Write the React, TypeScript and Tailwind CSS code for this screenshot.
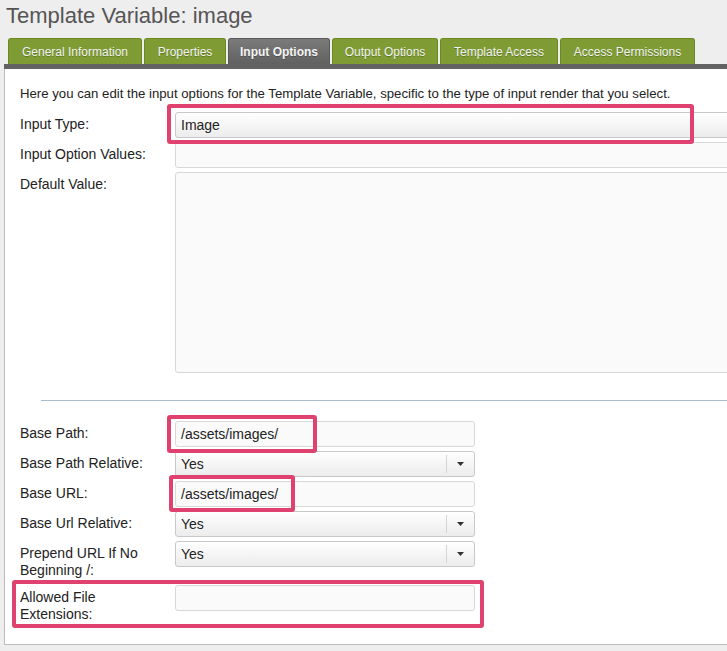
import React from "react";

const tabs = [
  { label: "General Information", w: "w-[134px]" },
  { label: "Properties", w: "w-[82px]" },
  { label: "Input Options", w: "w-[102px]", active: true },
  { label: "Output Options", w: "w-[106px]" },
  { label: "Template Access", w: "w-[118px]" },
  { label: "Access Permissions", w: "w-[135px]" },
];

function Select({ value, wide }: { value: string; wide?: boolean }) {
  return (
    <div
      className={`flex h-[26px] shrink-0 items-center rounded-[3px] border border-[#c8c8c8] bg-gradient-to-b from-white to-[#ececec] ${
        wide ? "w-[560px]" : "w-[300px]"
      }`}
    >
      <span className="flex-1 pl-[5px] text-[14px] text-[#222]">{value}</span>
      {!wide && (
        <span className="flex h-[18px] w-[28px] items-center justify-center border-l border-[#d4d4d4]">
          <svg width="7" height="4" viewBox="0 0 7 4">
            <path d="M0 0h7L3.5 4z" fill="#333" />
          </svg>
        </span>
      )}
    </div>
  );
}

function TextBox({ value, wide }: { value?: string; wide?: boolean }) {
  return (
    <div
      className={`flex h-[26px] shrink-0 items-center rounded-[3px] border border-[#d8d8d8] bg-[#fafafa] pl-[5px] text-[14px] text-[#222] ${
        wide ? "w-[560px]" : "w-[300px]"
      }`}
    >
      {value}
    </div>
  );
}

function Row({ label, children, h = "h-[30px]" }: { label: React.ReactNode; children: React.ReactNode; h?: string }) {
  return (
    <div className={`flex ${h}`}>
      <div className="w-[155px] shrink-0 pt-[4px] text-[14px] leading-[17px] text-[#222]">{label}</div>
      <div className="shrink-0">{children}</div>
    </div>
  );
}

export default function App() {
  return (
    <div
      className="h-[651px] w-[727px] overflow-hidden bg-[#eeeeee]"
      style={{ fontFamily: '"Liberation Sans", Arial, sans-serif' }}
    >
      <h1 className="pl-[6px] pt-[3px] text-[22px] leading-[26px] text-[#555]">Template Variable: image</h1>

      {/* tabs */}
      <div className="mt-[9px] flex gap-[2px] pl-[8px]">
        {tabs.map((t) => (
          <div
            key={t.label}
            className={`flex h-[26px] items-center justify-center rounded-t-[3px] border border-b-0 text-[12px] text-[#f2f2f2] [text-shadow:0_1px_0_rgba(0,0,0,0.25)] ${t.w} ${
              t.active
                ? "border-[#5a5a5a] bg-gradient-to-b from-[#7b7b7b] to-[#616161] font-bold text-[#f4f4f4]"
                : "border-[#6b8a20] bg-[#7e9c33]"
            }`}
          >
            {t.label}
          </div>
        ))}
      </div>
      <div className="ml-[4px] h-[5px] bg-[#626262]" />

      {/* panel */}
      <div className="ml-[4px] h-[576px] overflow-hidden border-b border-l border-[#bdbdbd] bg-white pl-[15px] pt-[16px]">
        <p className="whitespace-nowrap text-[13.2px] leading-[17px] text-[#222]">
          Here you can edit the input options for the Template Variable, specific to the type of input render that you
          select.
        </p>

        <div className="mt-[10px]">
          <Row label="Input Type:">
            <div className="relative">
              <Select value="Image" wide />
              <div className="absolute left-[-8px] top-[-8px] h-[40px] w-[527px] rounded-[3px] border-[4px] border-[#e0426f]" />
            </div>
          </Row>
          <Row label="Input Option Values:">
            <TextBox wide />
          </Row>
          <Row label="Default Value:" h="h-[228px]">
            <div className="h-[201px] w-[560px] rounded-[3px] border border-[#d8d8d8] bg-[#fafafa]" />
          </Row>
        </div>

        <div className="ml-[21px] h-px bg-[#a9bccb]" />

        <div className="mt-[20px]">
          <Row label="Base Path:">
            <div className="relative">
              <TextBox value="/assets/images/" />
              <div className="absolute left-[-8px] top-[-6px] h-[38px] w-[150px] rounded-[3px] border-[4px] border-[#e0426f]" />
            </div>
          </Row>
          <Row label="Base Path Relative:">
            <Select value="Yes" />
          </Row>
          <Row label="Base URL:">
            <div className="relative">
              <TextBox value="/assets/images/" />
              <div className="absolute left-[-6px] top-[-6px] h-[37px] w-[126px] rounded-[3px] border-[4px] border-[#e0426f]" />
            </div>
          </Row>
          <Row label="Base Url Relative:">
            <Select value="Yes" />
          </Row>
          <Row label={<>Prepend URL If No<br />Beginning /:</>} h="h-[44px]">
            <Select value="Yes" />
          </Row>
          <div className="relative">
            <Row label={<>Allowed File<br />Extensions:</>}>
              <TextBox />
            </Row>
            <div className="absolute left-[-8px] top-[-5px] h-[48px] w-[472px] rounded-[3px] border-[4px] border-[#e0426f]" />
          </div>
        </div>
      </div>
    </div>
  );
}
